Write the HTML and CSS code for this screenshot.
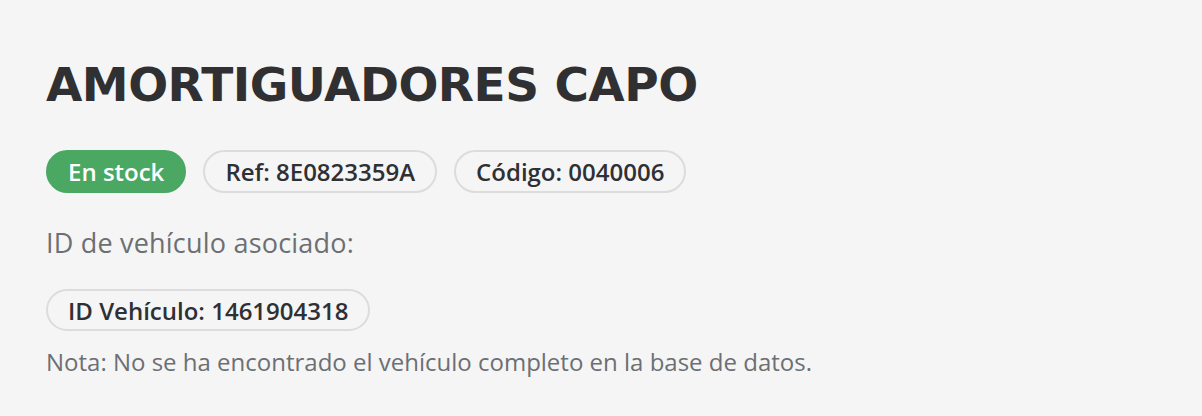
FILE: index.html
```html
<!DOCTYPE html>
<html lang="es">
<head>
<meta charset="utf-8">
<link rel="stylesheet" href="styles.css">
</head>
<body>
<main class="product">
  <h1 class="title">AMORTIGUADORES CAPO</h1>
  <div class="tags tags-main">
    <span class="pill pill-green">En stock</span>
    <span class="pill">Ref: 8E0823359A</span>
    <span class="pill">Código: 0040006</span>
  </div>
  <p class="label">ID de vehículo asociado:</p>
  <div class="tags tags-vehicle">
    <span class="pill pill-sm">ID Vehículo: 1461904318</span>
  </div>
  <p class="note">Nota: No se ha encontrado el vehículo completo en la base de datos.</p>
</main>
</body>
</html>
```
FILE: styles.css
```css
html, body {
  margin: 0;
  padding: 0;
  background: #f5f5f5;
}
body {
  font-family: "Open Sans", "Noto Sans", sans-serif;
}
.product {
  display: flex;
  flex-direction: column;
  align-items: flex-start;
  padding: 56px 46px 0;
}
.title {
  margin: 0;
  font-family: "DejaVu Sans", sans-serif;
  font-weight: 700;
  font-size: 47px;
  line-height: 58px;
  color: #303033;
  letter-spacing: -0.5px;
}
.tags {
  display: flex;
  gap: 17px;
}
.tags-main {
  margin-top: 36px;
}
.pill {
  display: inline-flex;
  align-items: center;
  height: 43px;
  box-sizing: border-box;
  padding: 0 20px;
  border: 2px solid #dcdcdc;
  border-radius: 22px;
  font-weight: 600;
  font-size: 24px;
  color: #2f3033;
}
.pill-sm {
  height: 42px;
}
.pill-green {
  background: #4aa862;
  border-color: #4aa862;
  color: #ffffff;
}
.label {
  margin: 32px 0 0;
  font-size: 27px;
  line-height: 36px;
  letter-spacing: 0.2px;
  color: #6c6f73;
}
.tags-vehicle {
  margin-top: 28px;
}
.note {
  margin: 15px 0 0;
  font-size: 24px;
  line-height: 32px;
  color: #6c6f73;
}
```
